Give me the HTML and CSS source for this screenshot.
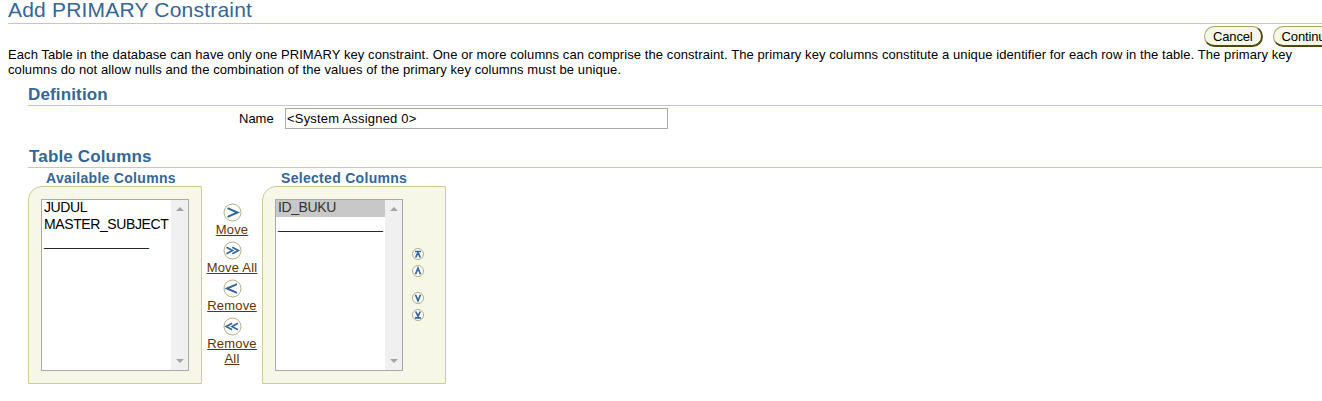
FILE: index.html
```
<!DOCTYPE html>
<html lang="en">
<head>
  <meta charset="UTF-8" />
  <title>Add PRIMARY Constraint</title>
  <link rel="stylesheet" href="styles.css">
</head>
<body>
  <h1>Add PRIMARY Constraint</h1>

  <div class="actions">
    <button class="btn">Cancel</button>
    <button class="btn">Continue</button>
  </div>

  <p class="intro">Each Table in the database can have only one PRIMARY key constraint. One or more columns can comprise the constraint. The primary key columns constitute a unique identifier for each row in the table. The primary key<br>columns do not allow nulls and the combination of the values of the primary key columns must be unique.</p>

  <section class="definition">
    <h2>Definition</h2>
    <div class="field">
      <label for="name">Name</label>
      <input type="text" id="name" value="&lt;System Assigned 0&gt;" />
    </div>
  </section>

  <section class="columns">
    <h2>Table Columns</h2>
    <div class="shuttle">
      <div class="side available">
        <h3>Available Columns</h3>
        <div class="panel">
          <div class="list">
            <ul>
              <li>JUDUL</li>
              <li>MASTER_SUBJECT</li>
              <li class="filler">_______________</li>
            </ul>
            <div class="scrollbar"><span class="up"></span><span class="down"></span></div>
          </div>
        </div>
      </div>

      <div class="moves">
        <a><svg width="19" height="19" viewBox="0 0 19 19"><circle cx="9.5" cy="9.5" r="8.5"/><path class="bold" d="M4.5 5.2L14.5 9.5L4.5 13.8"/></svg><span>Move</span></a>
        <a><svg width="19" height="19" viewBox="0 0 19 19"><circle cx="9.5" cy="9.5" r="8.5"/><path d="M3.5 6.3L9.5 9.5L3.5 12.7M9.3 6.3L15.3 9.5L9.3 12.7"/></svg><span>Move All</span></a>
        <a><svg width="19" height="19" viewBox="0 0 19 19"><circle cx="9.5" cy="9.5" r="8.5"/><path class="bold" d="M14 5.2L4 9.5L14 13.8"/></svg><span>Remove</span></a>
        <a><svg width="19" height="19" viewBox="0 0 19 19"><circle cx="9.5" cy="9.5" r="8.5"/><path d="M9.2 6.3L3.2 9.5L9.2 12.7M15 6.3L9 9.5L15 12.7"/></svg><span>Remove<br>All</span></a>
      </div>

      <div class="side selected">
        <h3>Selected Columns</h3>
        <div class="panel">
          <div class="list">
            <ul>
              <li class="active">ID_BUKU</li>
              <li class="filler">_______________</li>
            </ul>
            <div class="scrollbar"><span class="up"></span><span class="down"></span></div>
          </div>
          <div class="order">
            <svg width="12" height="12" viewBox="0 0 12 12"><circle cx="6" cy="6" r="5.5"/><path d="M3 3.5H9M3.7 9.5L6 4.5L8.3 9.5"/></svg>
            <svg width="12" height="12" viewBox="0 0 12 12"><circle cx="6" cy="6" r="5.5"/><path d="M3.5 9.3L6 3.2L8.5 9.3"/></svg>
            <svg class="gap" width="12" height="12" viewBox="0 0 12 12"><circle cx="6" cy="6" r="5.5"/><path d="M3.5 2.7L6 8.8L8.5 2.7"/></svg>
            <svg width="12" height="12" viewBox="0 0 12 12"><circle cx="6" cy="6" r="5.5"/><path d="M3.7 2.5L6 7.2L8.3 2.5M3 8.8H9"/></svg>
          </div>
        </div>
      </div>
    </div>
  </section>
</body>
</html>
```
FILE: styles.css
```
* {
  box-sizing: border-box;
}
body {
  margin: 0 0 0 8px;
  font-family: "Liberation Sans", Arial, sans-serif;
  font-size: 13px;
  color: #000;
  background: #fff;
  overflow: hidden;
}
h1, h2, h3 {
  margin: 0;
  color: #336699;
}
h1 {
  height: 24px;
  border-bottom: 1px solid #cccc99;
  font-size: 21px;
  font-weight: normal;
  letter-spacing: 0.2px;
  line-height: 20px;
}
h2 {
  height: 20px;
  border-bottom: 1px solid #cccc99;
  font-size: 17px;
  letter-spacing: 0.15px;
  line-height: 18px;
}
h3 {
  height: 18px;
  font-size: 14px;
  letter-spacing: 0.3px;
  line-height: 20px;
}
.actions {
  display: flex;
  gap: 10px;
  height: 23px;
  padding: 2px 0 0 1196px;
}
.btn {
  flex: none;
  height: 21px;
  padding: 0 8px;
  border: 1px solid #a5a56b;
  border-right: 2px solid #4a4a10;
  border-bottom: 2px solid #4a4a10;
  border-radius: 11px;
  background: #f7f7e7;
  color: #000;
  font: 13px/17px "Liberation Sans", Arial, sans-serif;
  letter-spacing: -0.15px;
}
.intro {
  margin: 0;
  letter-spacing: 0.08px;
  line-height: 15px;
  white-space: nowrap;
}
.definition {
  height: 62px;
  margin: 9px 0 0 20px;
}
.field {
  display: flex;
  align-items: center;
  padding: 2px 0 0 211px;
}
.field label {
  width: 46px;
}
.field input {
  width: 383px;
  height: 21px;
  padding: 0 1px;
  border: 1px solid #a9a9a9;
  font: 13px "Liberation Sans", Arial, sans-serif;
  letter-spacing: 0.2px;
}
.columns {
  margin-left: 20px;
}
.columns h2 {
  padding-left: 1px;
}
.shuttle {
  display: flex;
}
.side h3 {
  padding-left: 18px;
}
.selected h3 {
  padding-left: 19px;
}
.panel {
  display: flex;
  height: 198px;
  padding: 12px;
  border: 1px solid #cccc99;
  border-top-left-radius: 14px;
  background: #f7f7e7;
}
.available .panel {
  width: 174px;
}
.selected .panel {
  width: 184px;
}
.list {
  display: flex;
  width: 148px;
  height: 172px;
  border: 1px solid #a9a9a9;
  background: #fff;
}
.selected .list {
  width: 128px;
}
.list ul {
  flex: 1;
  min-width: 0;
  margin: 0;
  padding: 0;
  list-style: none;
}
.list li {
  height: 17px;
  padding-left: 2px;
  font-size: 14px;
  letter-spacing: -0.4px;
  line-height: 14px;
  white-space: nowrap;
}
.list .active {
  background: #c8c8c8;
  color: #333;
}
.list .filler {
  font-size: 12.6px;
  letter-spacing: 0;
  line-height: 16px;
}
.scrollbar {
  display: flex;
  flex-direction: column;
  justify-content: space-between;
  align-items: center;
  width: 17px;
  padding: 7px 0;
  background: #f0f0f0;
}
.up, .down {
  border: 4px solid transparent;
}
.up {
  border-top: 0;
  border-bottom-color: #a3a3a3;
}
.down {
  border-bottom: 0;
  border-top-color: #a3a3a3;
}
.moves {
  width: 60px;
  padding-top: 35px;
  text-align: center;
}
.moves a {
  display: block;
  height: 38px;
  color: #663300;
  letter-spacing: 0.2px;
  line-height: 15px;
  text-decoration: underline;
}
.moves svg {
  display: block;
  margin: 0 auto;
}
.moves span {
  display: block;
}
svg circle {
  fill: #fff;
  stroke: #adad84;
}
svg path {
  fill: none;
  stroke: #336699;
  stroke-width: 1.7;
}
svg .bold {
  stroke-width: 2;
}
.order {
  display: flex;
  flex-direction: column;
  gap: 5px;
  padding: 49px 0 0 9px;
}
.order .gap {
  margin-top: 10px;
}
```
